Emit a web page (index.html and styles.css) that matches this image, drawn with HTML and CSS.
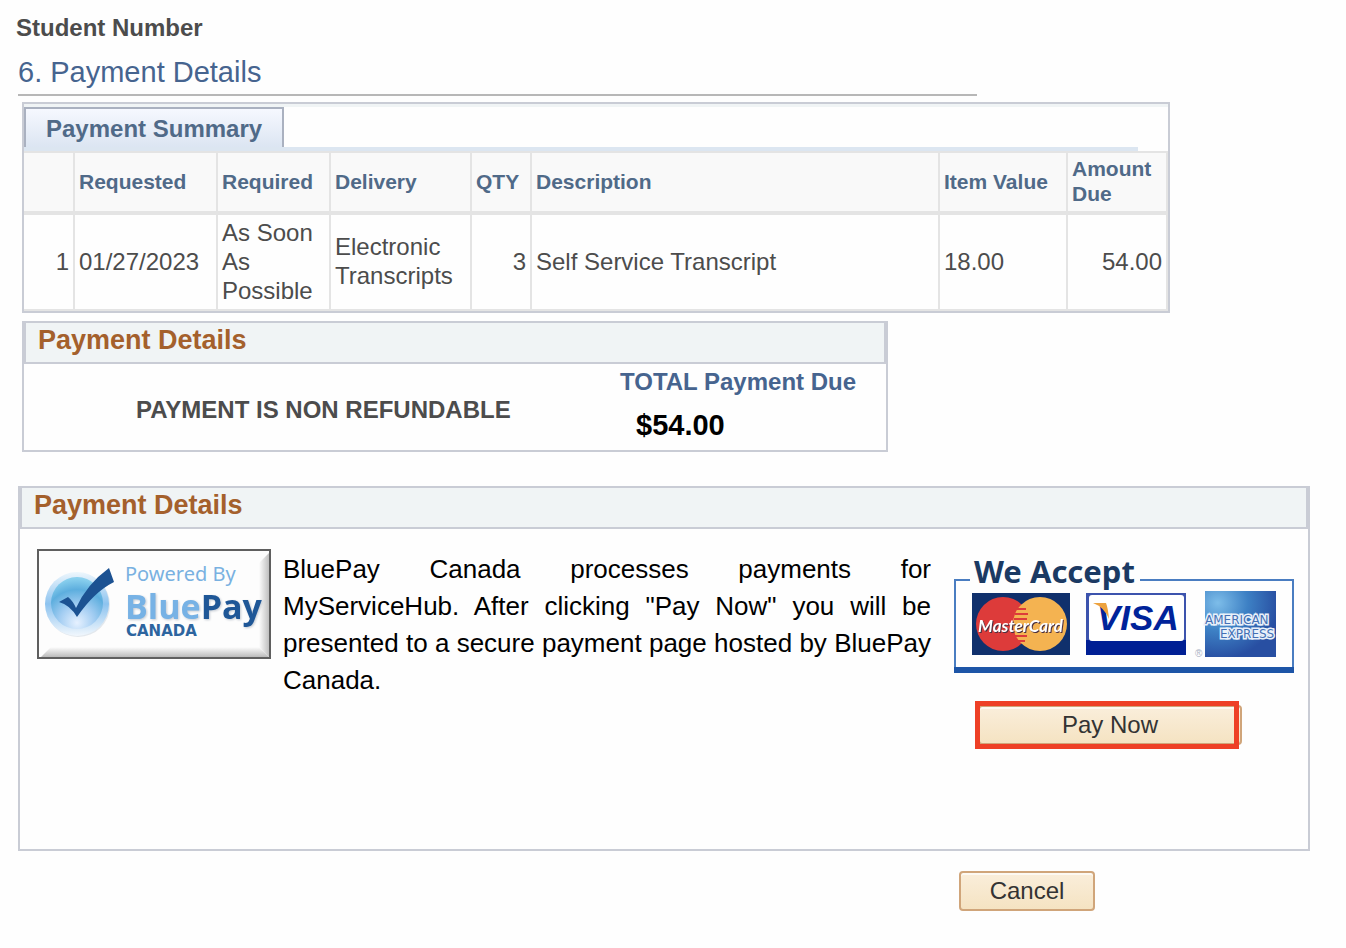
FILE: index.html
```html
<!DOCTYPE html>
<html lang="en">
  <head>
    <meta charset="UTF-8" />
    <meta name="viewport" content="width=device-width, initial-scale=1.0" />
    <title>Payment Details</title>
    <link rel="stylesheet" href="styles.css">
  </head>
  <body>
    <main class="page">
      <div class="student">Student Number</div>
      <h1 class="page-title">6. Payment Details</h1>

      <!-- Payment summary grid -->
      <section class="summary">
        <div class="tabs">
          <button class="tab" type="button">Payment Summary</button>
        </div>
        <table>
          <colgroup>
            <col class="col-row" />
            <col class="col-requested" />
            <col class="col-required" />
            <col class="col-delivery" />
            <col class="col-qty" />
            <col />
            <col class="col-value" />
            <col class="col-amount" />
          </colgroup>
          <thead>
            <tr>
              <th></th>
              <th>Requested</th>
              <th>Required</th>
              <th>Delivery</th>
              <th>QTY</th>
              <th>Description</th>
              <th>Item Value</th>
              <th>Amount Due</th>
            </tr>
          </thead>
          <tbody>
            <tr>
              <td class="num">1</td>
              <td>01/27/2023</td>
              <td>As Soon As Possible</td>
              <td>Electronic Transcripts</td>
              <td class="num">3</td>
              <td>Self Service Transcript</td>
              <td>18.00</td>
              <td class="num">54.00</td>
            </tr>
          </tbody>
        </table>
      </section>

      <section class="panel panel-total">
        <h2>Payment Details</h2>
        <div class="total-body">
          <div class="notice">PAYMENT IS NON REFUNDABLE</div>
          <div class="total">
            <div class="total-label">TOTAL Payment Due</div>
            <div class="total-value">$54.00</div>
          </div>
        </div>
      </section>

      <section class="panel panel-pay">
        <h2>Payment Details</h2>
        <div class="pay-body">
          <svg class="bluepay" viewBox="0 0 234 110" role="img" aria-label="Powered By BluePay Canada">
            <defs>
              <radialGradient id="ball" cx="50%" cy="88%" r="85%">
                <stop offset="0" stop-color="#e6f1ff" />
                <stop offset="0.4" stop-color="#a3cdf2" />
                <stop offset="0.75" stop-color="#5daede" />
                <stop offset="1" stop-color="#8ad0ee" />
              </radialGradient>
              <linearGradient id="ring" x1="0" x2="0" y1="0" y2="1">
                <stop offset="0" stop-color="#eef7fd" />
                <stop offset="0.5" stop-color="#8dc3ef" />
                <stop offset="1" stop-color="#f1f7fd" />
              </linearGradient>
              <linearGradient id="bevel-right" x1="0" x2="1" y1="0" y2="0">
                <stop offset="0" stop-color="#fdfdfd" />
                <stop offset="1" stop-color="#b9b9b9" />
              </linearGradient>
              <linearGradient id="bevel-bottom" x1="0" x2="0" y1="0" y2="1">
                <stop offset="0" stop-color="#fdfdfd" />
                <stop offset="1" stop-color="#b4b4b4" />
              </linearGradient>
            </defs>
            <rect x="1" y="1" width="232" height="108" fill="#fdfdfd" />
            <path d="M233 3V109L222 98V14Z" fill="url(#bevel-right)" />
            <path d="M3 109H233L222 98H14Z" fill="url(#bevel-bottom)" />
            <rect x="1" y="1" width="232" height="108" fill="none" stroke="#5f5f5f" stroke-width="2" />
            <circle cx="41" cy="56" r="32" fill="#e3e8ed" />
            <circle cx="40" cy="55" r="32" fill="url(#ring)" />
            <circle cx="40" cy="54" r="26" fill="url(#ball)" />
            <path d="M22 53L31 48Q36 52 39 59Q50 35 72 19L77 33Q57 43 40 68Q33 56 22 53Z" fill="#1c5292" />
            <text x="88" y="32" class="bp-powered">Powered By</text>
            <text x="88" y="70" class="bp-name">Blue<tspan class="bp-pay">Pay</tspan></text>
            <text x="89" y="87" class="bp-canada">CANADA</text>
          </svg>

          <p class="pay-text">BluePay Canada processes payments for MyServiceHub. After clicking "Pay Now" you will be presented to a secure payment page hosted by BluePay Canada.</p>

          <div class="pay-side">
            <svg class="accept" viewBox="0 0 342 117" role="img" aria-label="We Accept MasterCard, VISA, American Express">
              <defs>
                <radialGradient id="amex" cx="18%" cy="18%" r="85%">
                  <stop offset="0" stop-color="#7dbde9" />
                  <stop offset="0.5" stop-color="#3d80c4" />
                  <stop offset="1" stop-color="#284fa2" />
                </radialGradient>
              </defs>
              <path d="M17 23H2V112M187 23H340V112" fill="none" stroke="#4a7dc1" stroke-width="2" />
              <rect x="1" y="110" width="340" height="6" fill="#1d55a7" />
              <text x="21" y="26" class="we-accept">We Accept</text>

              <rect x="19" y="36" width="98" height="62" fill="#10306c" />
              <circle cx="50" cy="67" r="27" fill="#dd3b3a" />
              <circle cx="87" cy="67" r="27" fill="#f4b351" />
              <path d="M64 52h9M62 57h13M61 62h13M61 79h13M62 84h10" stroke="#dd3b3a" stroke-width="2" />
              <text x="25" y="75" class="mc-name">MasterCard</text>

              <rect x="133" y="36" width="100" height="62" fill="#3c53ad" />
              <rect x="133" y="83" width="100" height="15" fill="#001f94" />
              <rect x="136" y="38" width="95" height="46" rx="3" fill="#fff" />
              <text x="144" y="73" class="visa-name">VISA</text>
              <path d="M140 46H153Q155 51 156 62Q151 50 140 46Z" fill="#eda23e" />

              <rect x="252" y="34" width="71" height="66" fill="url(#amex)" />
              <text x="252" y="67" class="amex-name">AMERICAN</text>
              <text x="267" y="81" class="amex-name">EXPRESS</text>
              <text x="242" y="100" class="amex-mark">®</text>
            </svg>
            <div class="pay-action">
              <button class="btn btn-pay" type="button">Pay Now</button>
            </div>
          </div>
        </div>
      </section>

      <button class="btn btn-cancel" type="button">Cancel</button>
    </main>
  </body>
</html>
```

FILE: styles.css
```css
* {
  box-sizing: border-box;
}

body {
  margin: 0;
  background: #fefefe;
  color: #4c4c4c;
  font-family: "Liberation Sans", Arial, sans-serif;
  font-size: 24px;
}

.page {
  padding: 14px 36px 36px 18px;
}

.student {
  margin-left: -2px;
  font-weight: bold;
  line-height: 28px;
}

.page-title {
  max-width: 959px;
  margin: 12px 0 6px;
  padding-bottom: 4px;
  border-bottom: 2px solid #b7b7b7;
  color: #46648f;
  font-size: 29px;
  font-weight: normal;
  line-height: 36px;
}

/* Summary grid */
.summary {
  max-width: 1148px;
  margin: 0 4px 8px;
  padding-top: 3px;
  border: 2px solid #c9ccd5;
  box-shadow: inset 0 3px #f0f4f5;
}

.tabs {
  display: flex;
  margin-right: 30px;
  border-bottom: 4px solid #dce6f1;
}

.tab {
  height: 40px;
  padding: 2px 20px 0;
  border: 2px solid #aab1c0;
  border-bottom: 0;
  background: linear-gradient(#f6f8ff, #dce5f2);
  color: #506a88;
  font-family: inherit;
  font-size: 24px;
  font-weight: bold;
}

table {
  width: 100%;
  table-layout: fixed;
  border-collapse: separate;
  border-spacing: 0;
  border-top: 2px solid #e4e4e4;
}

.col-row {
  width: 51px;
}

.col-requested {
  width: 143px;
}

.col-required {
  width: 113px;
}

.col-delivery {
  width: 141px;
}

.col-qty {
  width: 60px;
}

.col-value {
  width: 128px;
}

.col-amount {
  width: 100px;
}

th,
td {
  padding: 3px 4px 5px;
  border-right: 2px solid #e4e4e4;
  border-bottom: 2px solid #e4e4e4;
  text-align: left;
  vertical-align: middle;
}

th {
  background: #f9f9f9;
  color: #506a88;
  font-size: 21px;
  line-height: 25px;
}

td {
  height: 98px;
  padding: 2px 4px 4px;
  border-top: 2px solid #e4e4e4;
  line-height: 29px;
}

td.num {
  text-align: right;
}

/* Panels */
.panel {
  border: 2px solid #c9ccd5;
}

.panel h2 {
  margin: 0;
  padding: 0 12px 5px;
  border: 2px solid #c9ccd5;
  border-top: 0;
  background: #f0f4f5;
  color: #a4602c;
  font-size: 27px;
  line-height: 34px;
}

.panel-total {
  max-width: 866px;
  margin: 0 4px 34px;
}

.total-body {
  display: grid;
  grid-template-columns: 484px 1fr;
  padding: 4px 0 8px 112px;
  font-weight: bold;
}

.notice {
  padding-top: 28px;
  line-height: 28px;
}

.total-label {
  color: #46648f;
  line-height: 28px;
}

.total-value {
  padding: 12px 0 0 16px;
  color: #000;
  font-size: 29px;
  line-height: 34px;
}

.pay-body {
  display: grid;
  grid-template-columns: 234px 1fr 342px;
  align-items: start;
  min-height: 320px;
  padding: 20px 13px 20px 17px;
}

.pay-text {
  margin: 2px 22px 0 12px;
  color: #000;
  font-size: 26px;
  line-height: 37px;
  text-align: justify;
}

.bluepay,
.accept {
  display: block;
  width: 100%;
  overflow: visible;
}

.pay-side {
  padding-top: 8px;
}

/* Buttons */
.btn {
  display: block;
  height: 40px;
  border: 2px solid #d0a57a;
  border-radius: 4px;
  background: linear-gradient(#faeedb, #f5e3c2);
  box-shadow: inset 0 2px #fdf9f2;
  color: #333;
  font-family: inherit;
  font-size: 24px;
  cursor: pointer;
}

.pay-action {
  position: relative;
  width: 264px;
  margin: 31px 0 0 25px;
}

/* red frame drawn over the pay button */
.pay-action::after {
  content: "";
  position: absolute;
  inset: -4px 3px -4px -3px;
  border: 5px solid #ee4026;
  pointer-events: none;
}

.btn-pay {
  width: 100%;
}

.btn-cancel {
  width: 136px;
  margin: 20px 0 0 941px;
}

/* BluePay badge */
.bp-powered {
  fill: #79b1e1;
  font: 20px "Noto Sans", sans-serif;
}

.bp-name {
  fill: #77b2e5;
  filter: drop-shadow(1px 1px 1px #c4cad2);
  font: bold 34px "Open Sans", sans-serif;
}

.bp-pay {
  fill: #1f5797;
}

.bp-canada {
  fill: #2d659f;
  font: bold 15px "DejaVu Sans", sans-serif;
}

/* Accepted cards */
.we-accept {
  fill: #1b3a63;
  font: bold 31px "Noto Sans", sans-serif;
}

.mc-name {
  fill: #fff;
  filter: drop-shadow(1px 1px 0 #4a3040);
  font: italic bold 17px Lato, sans-serif;
}

.visa-name {
  fill: #00239a;
  font: italic bold 35px "Liberation Sans", sans-serif;
}

.amex-name {
  fill: #4470b5;
  stroke: #e9f1fa;
  stroke-width: 3px;
  paint-order: stroke;
  font: 12px "DejaVu Sans", sans-serif;
}

.amex-mark {
  fill: #a9b2c4;
  font: 10px "Liberation Sans", sans-serif;
}
```
